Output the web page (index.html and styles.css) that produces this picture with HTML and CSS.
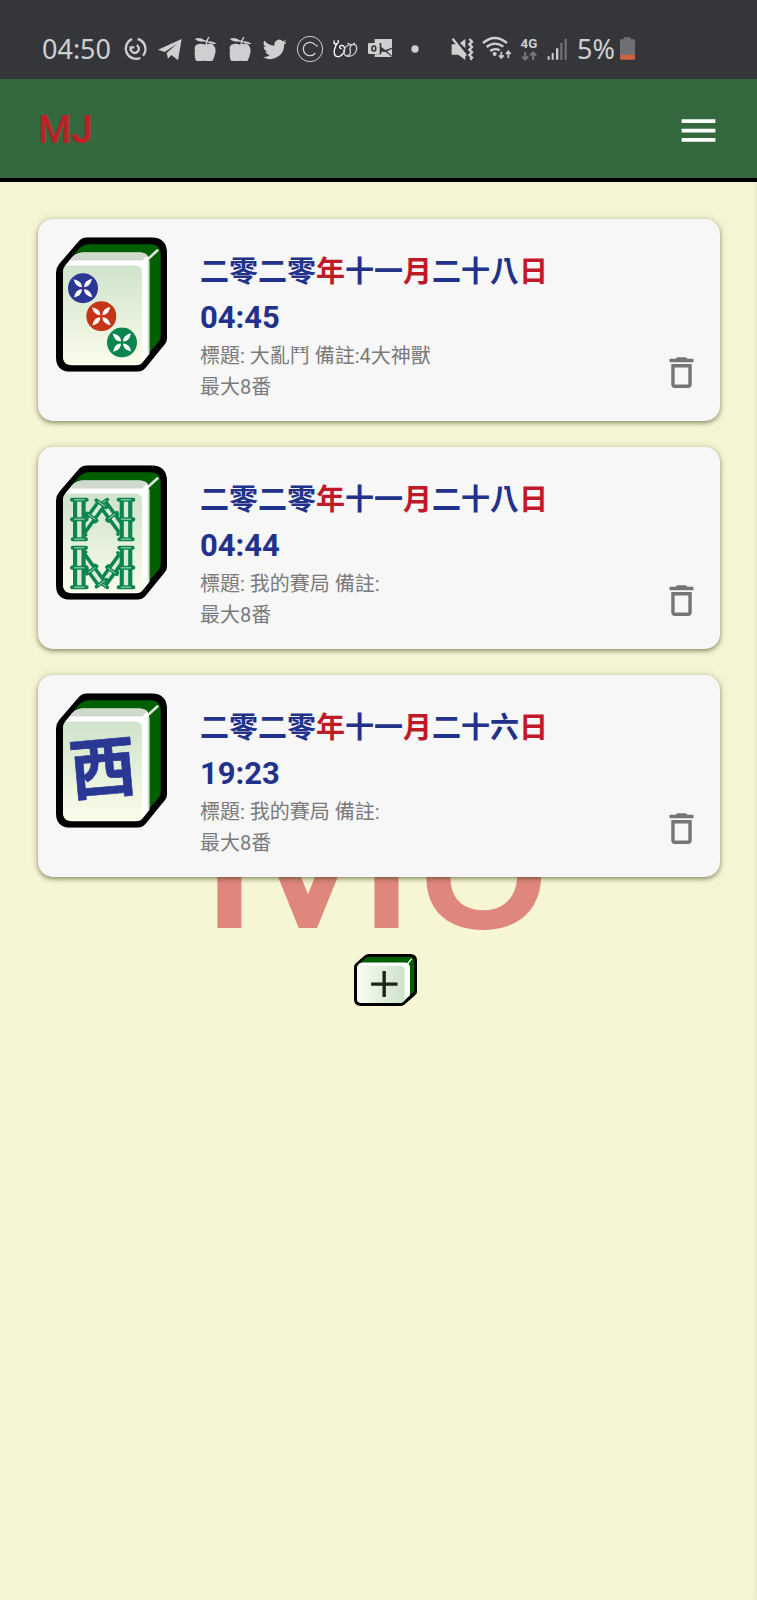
FILE: index.html
```html
<!DOCTYPE html>
<html lang="zh-Hant">
<head>
<meta charset="utf-8">
<meta name="viewport" content="width=device-width, initial-scale=1">
<title>MJ</title>
<link rel="stylesheet" href="styles.css">
</head>
<body>
<svg class="defs" aria-hidden="true">
  <defs>
    <linearGradient id="face" x1="0" y1="0" x2="0" y2="1"><stop offset="0" stop-color="#cfe3cb"/><stop offset="1" stop-color="#fbfde9"/></linearGradient>
    <linearGradient id="face-side" x1="0" y1="0" x2="1" y2="0"><stop offset="0" stop-color="#f8fcf0"/><stop offset="1" stop-color="#cfe3cb"/></linearGradient>
    <symbol id="tile" viewBox="78 80 333 404">
      <path d="M174 80H362Q411 80 411 128V385Q411 394 404 402L347 472Q337 484 320 484H124Q78 484 78 440V186Q78 172 88 160L146 92Q156 80 174 80Z" fill="#000"/>
      <path d="M178 101H360Q392 101 392 132V378Q392 386 387 392L350 436L330 300L300 150L126 140L150 112Q162 101 178 101Z" fill="#006000"/>
      <path d="M126 140Q140 126 160 126H330Q358 126 358 156V430Q350 442 338 455Q332 464 318 464H124Q99 464 99 438V184Q99 172 108 162Z" fill="#fff"/>
      <path d="M126 142Q140 126 160 126H330Q345 126 352 136L336 150H121Z" fill="#cfd9cd"/>
      <path d="M352 136Q358 146 358 156V430L353 437V150Z" fill="#cfe0cc"/>
      <path d="M110 165H316Q336 165 336 185V442Q336 462 316 462H124Q99 462 99 438V184Q99 172 110 165Z" fill="url(#face)"/>
      <path d="M338 160L382 120" stroke="#fff" stroke-width="8" stroke-linecap="round" opacity=".85"/>
    </symbol>
    <symbol id="dot" viewBox="-46 -46 92 92">
      <circle r="45" fill="currentColor"/>
      <g fill="#fff"><path id="petal" d="M3 -3Q3 -22 27 -28Q22 -3 3 -3Z"/><use href="#petal" transform="rotate(90)"/><use href="#petal" transform="rotate(180)"/><use href="#petal" transform="rotate(270)"/></g>
    </symbol>
    <g id="cane">
      <path d="M0 0V60" stroke="#0a8550" stroke-width="38"/>
      <path d="M0 0V60" stroke="#dcebd3" stroke-width="13"/>
      <path d="M-22 0H22M-20 60H20" stroke="#0a8550" stroke-width="12" stroke-linecap="round"/>
      <path d="M-14 0H14M-14 60H14" stroke="#b9dcc0" stroke-width="3" stroke-linecap="round"/>
    </g>
    <g id="cane-row">
      <g transform="translate(217 158) rotate(-36) scale(.85 .9)"><use href="#cane"/><use href="#cane" y="54"/></g>
      <g transform="translate(214 160) rotate(36) scale(.85 .9)"><use href="#cane"/><use href="#cane" y="54"/></g>
      <use href="#cane" x="148" y="148"/><use href="#cane" x="148" y="206"/>
      <use href="#cane" x="288" y="148"/><use href="#cane" x="288" y="206"/>
    </g>
    <symbol id="trash" viewBox="0 0 24 24"><path fill="currentColor" d="M6 19c0 1.100.9 2 2 2h8c1.100 0 2-.9 2-2V7H6v12zM8 9h8v10H8V9zm7.500-5l-1-1h-5l-1 1H5v2h14V4z"/></symbol>
    <symbol id="apple" viewBox="488 48 72 72">
      <path d="M524 71Q538 66 549 71Q558 82 555 96Q552 110 547 119Q535 121 524 119Q510 121 497 119Q491 106 494 88Q490 78 498 71Q512 66 524 71Z"/>
      <path d="M493 54Q511 46 525 60Q508 66 493 54ZM529 62Q545 57 559 68Q543 71 529 62Z"/>
      <path d="M520 59L533 62M527 72Q528 58 536 48" fill="none" stroke="currentColor" stroke-width="4"/>
    </symbol>
  </defs>
</svg>

<div class="status">
  <time class="clock">04:50</time>
  <div class="notices">
    <svg viewBox="278 48 72 72"><g fill="none" stroke="currentColor" stroke-width="7"><path d="M305 54A31 31 0 1 0 330 111M338 104A31 31 0 0 0 322 54"/><path d="M302 80A12 12 0 1 0 319 73M301 90V79H312"/></g></svg>
    <svg viewBox="384 48 72 72"><path d="M455 54L444 118L424 102L414 113L410 96L440 69L404 93L384 86Z"/></svg>
    <svg><use href="#apple"/></svg>
    <svg><use href="#apple"/></svg>
    <svg viewBox="0 0 24 24"><path d="M23.600 4.900a9.600 9.600 0 0 1-2.800.8 4.900 4.900 0 0 0 2.100-2.700 9.700 9.700 0 0 1-3.100 1.200 4.900 4.900 0 0 0-8.300 4.500A13.800 13.800 0 0 1 1.400 3.600a4.900 4.900 0 0 0 1.500 6.500 4.800 4.800 0 0 1-2.200-.6v.1a4.900 4.900 0 0 0 3.900 4.800 4.900 4.900 0 0 1-2.200.1 4.900 4.900 0 0 0 4.600 3.400A9.800 9.800 0 0 1 0 19.900a13.900 13.900 0 0 0 21.200-12.300 9.800 9.800 0 0 0 2.400-2.700z"/></svg>
    <svg viewBox="173 48 72 72"><g fill="none" stroke="currentColor"><circle cx="209" cy="84" r="38" stroke-width="3"/><path d="M225 72A20 20 0 1 0 225 96" stroke-width="4"/></g><circle cx="229" cy="74" r="3"/></svg>
    <svg viewBox="278 48 72 72"><g fill="none" stroke="#fff" stroke-width="4"><path d="M282 58Q278 72 290 68Q298 62 292 58M290 68Q280 84 282 98Q286 110 298 106Q314 98 313 82Q310 70 300 74Q294 80 304 84"/><path d="M326 72Q310 78 310 94Q314 108 328 106Q346 102 349 84Q350 70 338 70Q326 74 330 90Q332 104 318 104M322 66Q330 76 344 66" stroke="currentColor"/></g></svg>
    <svg viewBox="384 48 72 72"><path d="M404 54H456V80L436 87L424 78V66H404ZM424 92L436 92L456 108H404V100H424ZM456 84V104L441 91Z"/><rect x="384" y="66" width="35" height="33" rx="3"/><rect x="396" y="75" width="11" height="15" rx="5" fill="none" stroke="#353639" stroke-width="5"/></svg>
    <svg viewBox="489 48 72 72"><circle cx="525" cy="84" r="11"/></svg>
  </div>
  <div class="signals">
    <svg class="mute" viewBox="33 48 69 72"><path d="M35 70H48L76 96V117L55 101H35ZM60 66L76 54V82Z"/><path d="M38 53L78 104M88 54L96 62L88 70L96 78L88 86L96 94L88 102L96 110L91 116" fill="none" stroke="currentColor" stroke-width="7"/></svg>
    <svg class="wifi" viewBox="125 48 90 72"><g fill="none" stroke="currentColor" stroke-width="7"><path d="M128 66Q163 36 200 66M139 78Q163 58 189 77M150 90Q163 80 178 88"/><path d="M183 92V111M176 103L183 111L190 103M204 111V92M197 99L204 91L211 99" stroke-width="5"/></g><circle cx="163" cy="99" r="6"/></svg>
    <svg class="net" viewBox="243 48 54 72"><text x="243" y="80">4G</text><path d="M257 93V115M248 106L257 116L266 106M281 117V95M272 104L281 94L290 104" fill="none" stroke="#77787a" stroke-width="6"/></svg>
    <svg class="bars" viewBox="322 48 60 72"><path d="M324 106H330V116H324ZM336 96H342V116H336ZM349 82H356V116H349Z"/><path d="M362 66H368V116H362ZM375 53H381V116H375Z" fill="#77787a"/></svg>
  </div>
  <div class="power">
    <span>5%</span>
    <svg class="battery" viewBox="540 48 46 72"><path d="M552 48H573V54H582Q586 54 586 58V104H540V58Q540 54 544 54H552Z" fill="#6f7072"/><path d="M540 102H586V113Q586 117 582 117H544Q540 117 540 113Z" fill="#cf6040"/></svg>
  </div>
</div>

<header class="appbar">
  <a class="brand" href="#">M<b>J</b></a>
  <button class="menu" type="button" aria-label="選單"><svg viewBox="0 0 24 24"><path fill="currentColor" d="M3 18h18v-2H3v2zm0-5h18v-2H3v2zm0-7v2h18V6H3z"/></svg></button>
</header>

<main class="page">
  <div class="watermark" aria-hidden="true">MJ</div>
  <article class="card">
    <svg class="tile" viewBox="78 80 333 404"><use href="#tile" x="78" y="80" width="333" height="404"/>
      <use href="#dot" x="113" y="187" width="92" height="92" color="#2a3793"/>
      <use href="#dot" x="168" y="271" width="92" height="92" color="#c53417"/>
      <use href="#dot" x="230" y="350" width="92" height="92" color="#0a8550"/>
    </svg>
    <div class="info">
      <h2 class="date">二零二零<em>年</em>十一<em>月</em>二十八<em>日</em></h2>
      <time class="hour">04:45</time>
      <p>標題: 大亂鬥 備註:4大神獸</p>
      <p>最大8番</p>
    </div>
    <button class="remove" type="button" aria-label="刪除"><svg><use href="#trash"/></svg></button>
  </article>
  <article class="card">
    <svg class="tile" viewBox="78 80 333 404"><use href="#tile" x="78" y="80" width="333" height="404"/>
      <g transform="translate(0 36)"><use href="#cane-row"/><use href="#cane-row" transform="translate(0 558) scale(1 -1)"/></g>
    </svg>
    <div class="info">
      <h2 class="date">二零二零<em>年</em>十一<em>月</em>二十八<em>日</em></h2>
      <time class="hour">04:44</time>
      <p>標題: 我的賽局 備註:</p>
      <p>最大8番</p>
    </div>
    <button class="remove" type="button" aria-label="刪除"><svg><use href="#trash"/></svg></button>
  </article>
  <article class="card">
    <svg class="tile" viewBox="78 80 333 404"><use href="#tile" x="78" y="80" width="333" height="404"/>
      <text class="wind" x="218" y="378" transform="rotate(-5 218 306)">西</text>
    </svg>
    <div class="info">
      <h2 class="date">二零二零<em>年</em>十一<em>月</em>二十六<em>日</em></h2>
      <time class="hour">19:23</time>
      <p>標題: 我的賽局 備註:</p>
      <p>最大8番</p>
    </div>
    <button class="remove" type="button" aria-label="刪除"><svg><use href="#trash"/></svg></button>
  </article>
  <div class="actions">
    <button class="add" type="button" aria-label="新增">
      <svg viewBox="462 313 188 155">
        <path d="M506 313H630Q650 313 650 333V426Q650 431 645 435L612 464Q607 468 600 468H482Q462 468 462 448V352Q462 346 466 342L493 318Q498 313 506 313Z"/>
        <path d="M506 322H628Q642 322 642 336V424L628 436L600 350L482 338L496 326Q500 322 506 322Z" fill="#006000"/>
        <path d="M486 338H612Q629 338 629 354V436L611 453Q606 459 598 459H484Q471 459 471 446V352Q474 340 486 338Z" fill="#fff"/>
        <path d="M484 348H600Q613 348 613 360V446Q613 459 600 459H484Q471 459 471 446V360Q471 348 484 348Z" fill="url(#face-side)"/>
        <path d="M622 342L633 328" stroke="#fff" stroke-width="4" stroke-linecap="round"/>
        <path d="M513 403H592M552 364V441" stroke="#1c241c" stroke-width="10"/>
      </svg>
    </button>
  </div>
</main>
</body>
</html>
```
FILE: styles.css
```css
* { box-sizing: border-box; }

body {
  margin: 0;
  min-height: 100vh;
  display: flex;
  flex-direction: column;
  background: #f6f5d4;
  font-family: Roboto, "Noto Sans CJK TC", sans-serif;
}

button {
  padding: 0;
  border: 0;
  background: none;
  cursor: pointer;
}

svg { display: block; }

.defs {
  position: absolute;
  width: 0;
  height: 0;
}

.status {
  display: flex;
  align-items: center;
  height: 79px;
  padding: 18px 42px 0;
  background: #353639;
  color: #cecfd0;
  font: 27px/32px "Noto Sans", sans-serif;
}

.status svg {
  height: 24px;
  fill: currentColor;
  overflow: visible;
}

.notices {
  display: flex;
  gap: 11px;
  margin: 0 24px 0 12px;
}

.notices svg { width: 24px; }

.signals {
  display: flex;
  gap: 8px;
}

.mute { width: 23px; }
.wifi { width: 30px; }
.net { width: 19px; }
.bars { width: 20px; }
.battery { width: 15px; }

.net text {
  font: bold 40px Roboto, sans-serif;
}

.power {
  display: flex;
  align-items: center;
  gap: 5px;
  margin-left: 10px;
}

.appbar {
  display: flex;
  align-items: center;
  justify-content: space-between;
  height: 103px;
  padding: 3px 36px 0 38px;
  border-bottom: 4px solid #000;
  background: #34693f;
}

.brand {
  color: #c01f28;
  font-size: 38px;
  font-weight: 500;
  line-height: 48px;
  text-decoration: none;
}

.brand b { font-weight: 700; }

.menu { color: #fff; }

.menu svg {
  width: 45px;
  height: 45px;
}

.page {
  position: relative;
  z-index: 0;
  flex: 1;
  display: flex;
  flex-direction: column;
  gap: 26px;
  padding: 37px 37px 37px 38px;
  box-shadow: inset -4px 0 4px -2px rgba(0, 0, 0, 0.06);
}

.watermark {
  position: absolute;
  z-index: -1;
  top: 504px;
  left: 0;
  right: 0;
  color: #df877d;
  font-size: 256px;
  line-height: 310px;
  text-align: center;
}

.card {
  display: flex;
  align-items: flex-start;
  padding: 18px;
  border-radius: 15px;
  background: #f7f7f7;
  box-shadow: 0 2px 4px rgba(60, 60, 20, 0.5), 0 0 10px rgba(60, 60, 20, 0.14);
}

.tile {
  flex: none;
  width: 111px;
  height: 135px;
}

.wind {
  fill: #2a3793;
  stroke: #2a3793;
  stroke-width: 2px;
  text-anchor: middle;
  font: bold 200px "Noto Sans CJK TC", sans-serif;
}

.info {
  flex: 1;
  padding: 12px 0 0 33px;
}

.date,
.hour {
  display: block;
  margin: 0;
  color: #22318a;
  font-size: 29px;
  font-weight: 700;
  line-height: 46px;
}

.hour { font-size: 31px; }

.date em {
  color: #be1a28;
  font-style: normal;
}

.info p {
  margin: 0;
  color: #7a7a7a;
  font-size: 20px;
  line-height: 31px;
}

.remove {
  align-self: flex-end;
  margin-bottom: 10px;
  color: #757575;
}

.remove svg {
  width: 41px;
  height: 41px;
}

.actions {
  display: flex;
  justify-content: center;
  padding: 51px 0 0 12px;
}

.add svg {
  width: 63px;
  height: 52px;
}
```
